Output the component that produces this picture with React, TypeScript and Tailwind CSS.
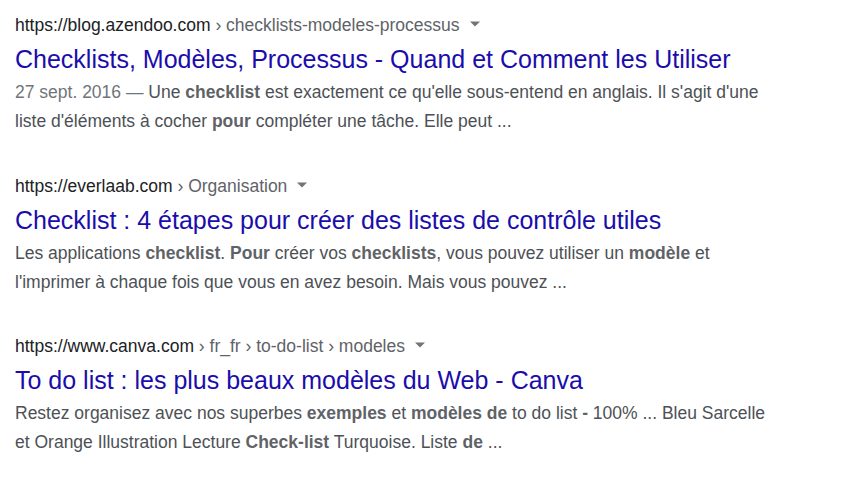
type Result = {
  site: string;
  crumbs: string;
  title: string;
  lines: React.ReactNode[];
};

const results: Result[] = [
  {
    site: "https://blog.azendoo.com",
    crumbs: " › checklists-modeles-processus",
    title: "Checklists, Modèles, Processus - Quand et Comment les Utiliser",
    lines: [
      <>
        <span className="text-[#70757a]">27 sept. 2016 — </span>Une <b>checklist</b> est exactement ce qu'elle
        sous-entend en anglais. Il s'agit d'une
      </>,
      <>
        liste d'éléments à cocher <b>pour</b> compléter une tâche. Elle peut ...
      </>,
    ],
  },
  {
    site: "https://everlaab.com",
    crumbs: " › Organisation",
    title: "Checklist : 4 étapes pour créer des listes de contrôle utiles",
    lines: [
      <>
        Les applications <b>checklist</b>. <b>Pour</b> créer vos <b>checklists</b>, vous pouvez utiliser un{" "}
        <b>modèle</b> et
      </>,
      <>l'imprimer à chaque fois que vous en avez besoin. Mais vous pouvez ...</>,
    ],
  },
  {
    site: "https://www.canva.com",
    crumbs: " › fr_fr › to-do-list › modeles",
    title: "To do list : les plus beaux modèles du Web - Canva",
    lines: [
      <>
        Restez organisez avec nos superbes <b>exemples</b> et <b>modèles de</b> to do list <b>-</b> 100% ... Bleu
        Sarcelle
      </>,
      <>
        et Orange Illustration Lecture <b>Check-list</b> Turquoise. Liste <b>de</b> ...
      </>,
    ],
  },
];

function Caret() {
  return (
    <svg width="10" height="6" viewBox="0 0 10 5" className="ml-[10px] mb-[2px]">
      <path d="M0 0 L10 0 L5 5 Z" fill="#70757a" />
    </svg>
  );
}

export default function App() {
  return (
    <div className="min-h-[493px] w-[849px] bg-white pl-[15px] pt-[14px] font-['Liberation_Sans',Arial,sans-serif]">
      {results.map((r) => (
        <div key={r.site} className="mb-[38.5px]">
          <div className="flex items-center whitespace-pre text-[17.5px] leading-[22px]">
            <span className="text-[#202124]">{r.site}</span>
            <span className="text-[#5f6368]">{r.crumbs}</span>
            <Caret />
          </div>
          <div className="mt-[8px] text-[25px] leading-[30px] text-[#1a0dab]">{r.title}</div>
          <div className="mt-[4px] text-[17.5px] leading-[29px] text-[#4d5156] [&_b]:text-[#5f6368]">
            {r.lines.map((l, i) => (
              <div key={i}>{l}</div>
            ))}
          </div>
        </div>
      ))}
    </div>
  );
}
